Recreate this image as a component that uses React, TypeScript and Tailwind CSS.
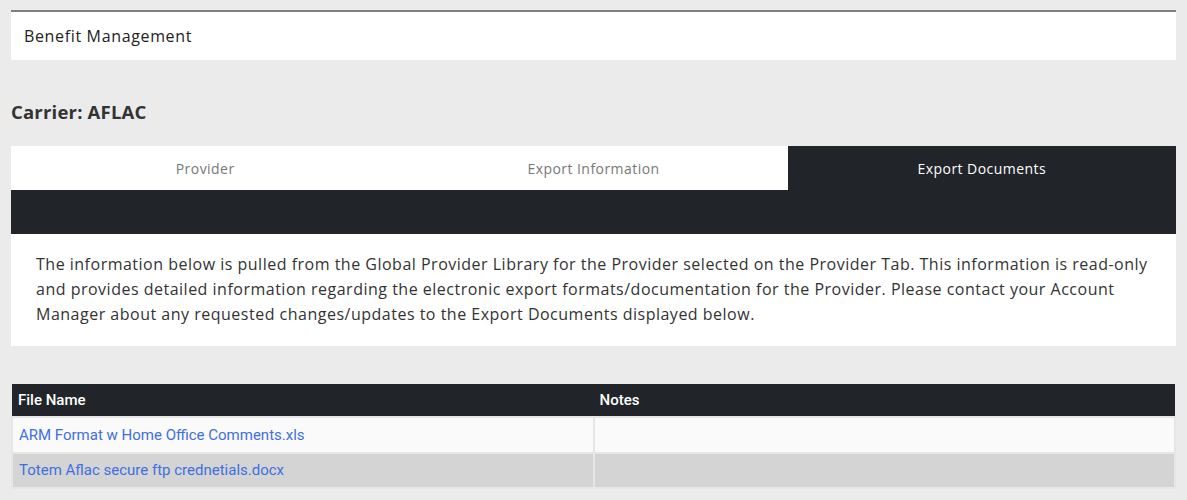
export default function App() {
  const files = [
    { name: "ARM Format w Home Office Comments.xls", notes: "" },
    { name: "Totem Aflac secure ftp crednetials.docx", notes: "" },
  ];

  return (
    <div className="min-h-[500px] bg-[#ebebeb] px-[11px] pt-[10px] pb-4 text-[#333] font-['Open_Sans','Liberation_Sans',sans-serif]">
      <div className="border-t-2 border-[#7f7f7f] bg-white h-[50px] flex items-center px-[13px] pb-[1px] text-[16px] tracking-[0.65px] text-[#222]">
        Benefit Management
      </div>

      <h2 className="mt-[40px] text-[18.5px] tracking-[0.2px] font-bold text-[#333] leading-[24px]">Carrier: AFLAC</h2>

      <div className="mt-[22px] grid grid-cols-3 h-[44px] bg-white text-[14px] tracking-[0.45px]">
        <div className="flex items-center justify-center text-[#777]">Provider</div>
        <div className="flex items-center justify-center text-[#777]">Export Information</div>
        <div className="flex items-center justify-center bg-[#212529] text-white">Export Documents</div>
      </div>
      <div className="h-[44px] bg-[#212529]" />

      <div className="bg-white px-[25px] pt-[18px] pb-[19px] text-[16px] leading-[25px] tracking-[0.5px] text-[#333] whitespace-nowrap">
        <span className="block">The information below is pulled from the Global Provider Library for the Provider selected on the Provider Tab. This information is read-only</span>
        <span className="block">and provides detailed information regarding the electronic export formats/documentation for the Provider. Please contact your Account</span>
        <span className="block">Manager about any requested changes/updates to the Export Documents displayed below.</span>
      </div>

      <table className="mt-[38px] w-full border-collapse text-[15px] font-['Roboto','Liberation_Sans',sans-serif]">
        <thead>
          <tr className="bg-[#212529] text-white h-[33px]">
            <th className="text-left font-medium px-[6px] w-1/2">File Name</th>
            <th className="text-left font-medium px-[6px]">Notes</th>
          </tr>
        </thead>
        <tbody>
          {files.map((f, i) => (
            <tr key={i} className={i % 2 === 0 ? "bg-[#fafafa] h-[36px]" : "bg-[#d4d4d4] h-[35px]"}>
              <td className="px-[6px] border-2 border-[#e6e6e6]">
                <a href="#" className="text-[#3f6fe0]">{f.name}</a>
              </td>
              <td className="px-[6px] border-2 border-[#e6e6e6]">{f.notes}</td>
            </tr>
          ))}
        </tbody>
      </table>
    </div>
  );
}
